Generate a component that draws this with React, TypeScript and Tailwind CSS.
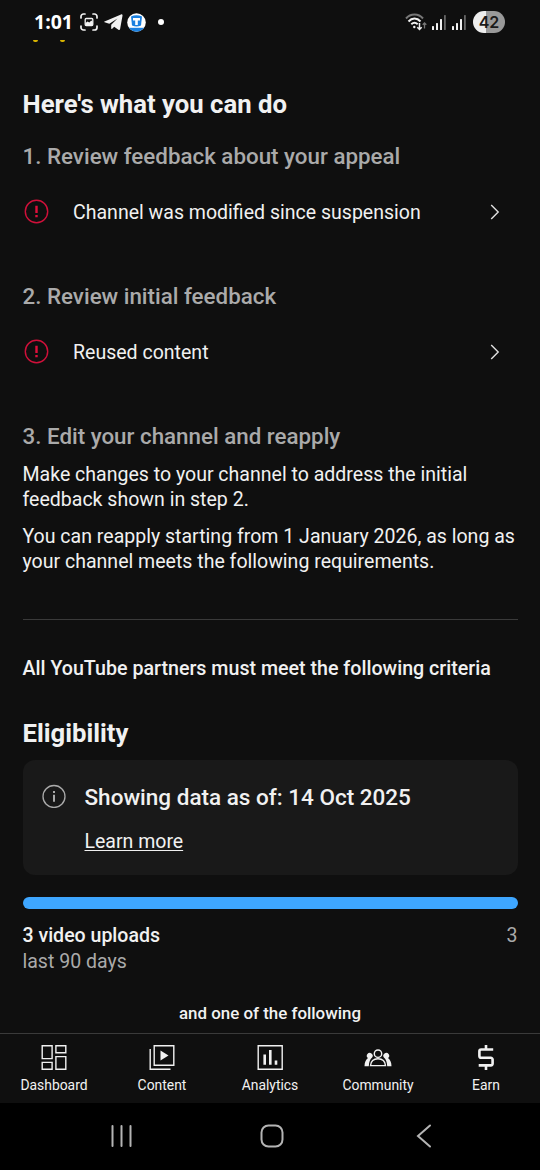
import type { ReactNode } from "react";

/* ---------- Status bar ---------- */

function SignalBars() {
  return (
    <svg width="14" height="15" viewBox="0 0 14 15" fill="#f1f1f1">
      <rect x="0" y="11" width="2" height="4" rx="0.6" />
      <rect x="4" y="8" width="2" height="7" rx="0.6" />
      <rect x="8" y="4" width="2" height="11" rx="0.6" />
      <rect x="12" y="0" width="1.8" height="15" rx="0.6" fill="#666" />
    </svg>
  );
}

function StatusBar() {
  return (
    <header className="relative flex h-11 items-center justify-between pl-[34px] pr-[35px]">
      <div className="flex items-center">
        <span className="w-[46px] font-['Open_Sans',sans-serif] text-[19.5px] font-bold leading-none text-white">
          1:01
        </span>
        {/* Smart capture */}
        <svg width="18" height="18" viewBox="0 0 18 18" fill="none" stroke="#f1f1f1" strokeWidth="1.7" strokeLinecap="round">
          <path d="M1 5V3.500a2.500 2.500 0 0 1 2.500-2.500H5M13 1h1.500A2.500 2.500 0 0 1 17 3.500V5M17 13v1.500a2.500 2.500 0 0 1-2.500 2.500H13M5 17H3.500A2.500 2.500 0 0 1 1 14.500V13" />
          <rect x="5.200" y="5.500" width="7.600" height="7" rx="1" strokeWidth="1.300" />
          <path d="M5.500 12.500V10l2-1.500 1.800 1 2-2 1.500 1.500v3.500z" fill="#f1f1f1" stroke="none" />
        </svg>
        {/* Telegram */}
        <svg className="ml-1.5" width="19" height="17" viewBox="0 0 19 17" fill="#f1f1f1">
          <path d="M0.500 7.400 17 0.500c1-.4 1.700.1 1.500 1.200l-2.400 13.400c-.2 1-.9 1.200-1.700.7l-4.200-3.100-2 2c-.5.500-1 .3-1-.4V10.800L13.500 4.600 5.300 9.700.6 8.300c-.7-.2-.7-.6-.1-.9z" />
        </svg>
        <svg className="ml-[4px]" width="19" height="19" viewBox="0 0 19 19">
          <defs>
            <clipPath id="badge">
              <circle cx="9.500" cy="9.500" r="9.300" />
            </clipPath>
          </defs>
          <circle cx="9.500" cy="9.500" r="9.300" fill="#fff" />
          <g clipPath="url(#badge)">
            <rect y="14.800" width="19" height="5" fill="#1a80e0" />
            <path d="M4 3.500Q9.500 1 15 3.500L14 12.500Q9.500 14.500 5 12.500z" fill="#1a80e0" />
            <path d="M6 5h7v2.500h-2.200v4.500H8.200V7.500H6z" fill="#fff" />
          </g>
        </svg>
        <span className="ml-[11.5px] size-1.5 rounded-full bg-white" />
      </div>

      <div className="flex items-center">
        <svg width="22" height="18" viewBox="0 0 22 18" fill="none" stroke="#f1f1f1" strokeWidth="2">
          <path d="M1 5.500C5.500.2 13.500.2 18 5.500" stroke="#777" />
          <path d="M3.500 8.500C7 4.600 12 4.600 15.500 8.500" />
          <path d="M6.300 11.300C8.300 9.400 10.700 9.400 12.700 11.300" />
          <circle cx="9.300" cy="14" r="1.200" fill="#f1f1f1" stroke="none" />
          <path d="M14.500 10v6.500M12.300 14.300l2.200 2.200 2.200-2.200" strokeWidth="1.500" />
          <path d="M19.500 15.500V10M17.700 11.800l1.800-1.800 1.800 1.800" strokeWidth="1.300" stroke="#777" />
        </svg>
        <span className="ml-[5px]">
          <SignalBars />
        </span>
        <span className="ml-[6px]">
          <SignalBars />
        </span>
        <span className="ml-[7px] flex h-[22px] w-8 items-center justify-center rounded-full bg-linear-to-r from-[#eeeeee] from-42% to-[#999999] to-42% font-['Inter',sans-serif] text-[16px] font-semibold text-[#1a1a1a]">
          42
        </span>
      </div>

      {/* Bottom edge of the illustration scrolled under the bar */}
      <span className="absolute left-[33px] top-10 h-0.5 w-[5px] rounded-b-full bg-[#d8b400]" />
      <span className="absolute left-[60px] top-10 h-0.5 w-[5px] rounded-b-full bg-[#d8b400]" />
    </header>
  );
}

/* ---------- Steps ---------- */

function StepHeading({ children }: { children: ReactNode }) {
  return <h2 className="text-[22.35px] font-medium leading-7 text-[#aaaaaa]">{children}</h2>;
}

function FeedbackRow({ label }: { label: string }) {
  return (
    <button className="mt-3.5 flex h-14 w-full items-center text-left">
      <svg className="-mt-0.5 ml-px" width="25" height="25" viewBox="0 0 25 25" fill="none">
        <circle cx="12.500" cy="12.500" r="11.200" stroke="#d0103a" strokeWidth="1.400" />
        <path d="M11.300 6.700h2.400v7.300h-2.400zM11.300 16h2.400v2.200h-2.400z" fill="#e0103c" />
      </svg>
      <span className="ml-[24.5px] mt-px flex-1 text-[19.55px] text-[#f1f1f1]">{label}</span>
      <svg className="-mt-px mr-[18px]" width="10" height="16" viewBox="0 0 10 16" fill="none" stroke="#e0e0e0" strokeWidth="1.400">
        <path d="M1.200 1l7 7-7 7" />
      </svg>
    </button>
  );
}

/* ---------- Eligibility ---------- */

function DataNotice() {
  return (
    <div className="mt-[11px] flex h-[115px] rounded-xl bg-[#191919] pl-[19px] pt-6">
      <svg width="24" height="24" viewBox="0 0 24 24" fill="none">
        <circle cx="12" cy="12.500" r="11" stroke="#aaaaaa" strokeWidth="1.300" />
        <path d="M11 7h2v2h-2zM11 10.700h2v7h-2z" fill="#aaaaaa" />
      </svg>
      <div className="ml-[19px]">
        <p className="text-[22.5px] font-medium leading-7 -mt-[1px] text-[#f1f1f1]">Showing data as of: 14 Oct 2025</p>
        <a href="#" className="mt-[18px] block text-[19.5px] leading-[25px] text-[#f1f1f1] underline underline-offset-2">
          Learn more
        </a>
      </div>
    </div>
  );
}

/* ---------- Bottom navigation ---------- */

const tabs: { label: string; icon: ReactNode }[] = [
  {
    label: "Dashboard",
    icon: (
      <g stroke="#f1f1f1" strokeWidth="1.400">
        <path d="M2.200 2.700h9.900v12.900H2.200zM15.900 2.700h9.900v7.100h-9.900zM2.200 19.400h9.900v6.900H2.200zM15.900 13.600h9.900v12.700h-9.900z" />
      </g>
    ),
  },
  {
    label: "Content",
    icon: (
      <g stroke="#f1f1f1" strokeWidth="1.400">
        <path d="M6.200 2.700h19.600v19.600H6.200zM2.200 6v20.300H22.500" />
        <path d="M12.500 7.500v10l8-5z" fill="#f1f1f1" stroke="none" />
      </g>
    ),
  },
  {
    label: "Analytics",
    icon: (
      <g stroke="#f1f1f1">
        <path d="M2.200 2.700h24v23.600h-24z" strokeWidth="1.400" />
        <path d="M8.700 11.500v10.300M14.300 7v14.800M20 17.500v4.300" strokeWidth="2.600" />
      </g>
    ),
  },
  {
    label: "Community",
    icon: (
      <g>
        <path d="M0.500 23.300c0-4.200 1.700-6.700 3.500-8.200a2.900 2.900 0 1 1 4.100-.600c-2.100 2-3.100 4.400-3.300 8.800zM27.500 23.300c0-4.200-1.700-6.700-3.500-8.200a2.900 2.900 0 1 0-4.100-.600c2.100 2 3.100 4.400 3.300 8.800z" fill="#f1f1f1" />
        <circle cx="14" cy="10.700" r="3.700" stroke="#f1f1f1" strokeWidth="1.400" fill="#0f0f0f" />
        <path d="M6.500 22.600c.4-4.600 3.400-6.900 7.500-6.900s7.100 2.300 7.500 6.900z" stroke="#f1f1f1" strokeWidth="1.400" fill="#0f0f0f" />
      </g>
    ),
  },
  {
    label: "Earn",
    icon: (
      <path
        d="M21.200 6.500H9.200a1.800 1.800 0 0 0-1.800 1.800V13a1.800 1.800 0 0 0 1.800 1.800h9.600a1.800 1.800 0 0 1 1.800 1.800v4a1.800 1.800 0 0 1-1.800 1.800H6.700M14 2v4.500M14 22.500V27"
        stroke="#f1f1f1"
        strokeWidth="2.600"
      />
    ),
  },
];

function BottomNav() {
  return (
    <nav className="grid h-[70px] grid-cols-5 border-t border-[#3a3a3a]">
      {tabs.map((tab) => (
        <a key={tab.label} href="#" className="flex flex-col items-center pt-[9px]">
          <svg width="29" height="29" viewBox="0 0 29 29" fill="none">
            {tab.icon}
          </svg>
          <span className="mt-[4px] text-[13.9px] leading-[18px] text-[#f1f1f1]">{tab.label}</span>
        </a>
      ))}
    </nav>
  );
}

function SystemNav() {
  return (
    <div className="flex flex-1 items-center justify-between bg-black pb-0.5 pl-[110px] pr-[108px] text-[#b4b4b4]">
      <svg width="23" height="22" viewBox="0 0 23 22" stroke="currentColor" strokeWidth="2" strokeLinecap="round">
        <path d="M2.500 1v20M11.500 1v20M20.500 1v20" />
      </svg>
      <svg className="-ml-[5px]" width="24" height="24" viewBox="0 0 24 24" fill="none" stroke="currentColor" strokeWidth="2">
        <rect x="1.500" y="1.500" width="21" height="21" rx="7" />
      </svg>
      <svg width="16" height="24" viewBox="0 0 16 24" fill="none" stroke="currentColor" strokeWidth="2" strokeLinecap="round">
        <path d="M14 1.500 2 12l12 10.500" />
      </svg>
    </div>
  );
}

export default function App() {
  return (
    <div className="flex h-[1170px] w-[540px] flex-col overflow-hidden bg-[#0f0f0f] font-['Roboto',sans-serif]">
      <StatusBar />

      {/* Main Content */}
      <main className="flex h-[989px] flex-col px-[22.5px] text-[19.55px] text-[#f1f1f1]">
        <h1 className="mt-11 text-[25.7px] font-bold leading-8">Here's what you can do</h1>

        <section className="mt-[22px]">
          <StepHeading>1. Review feedback about your appeal</StepHeading>
          <FeedbackRow label="Channel was modified since suspension" />
        </section>

        <section className="mt-[42px]">
          <StepHeading>2. Review initial feedback</StepHeading>
          <FeedbackRow label="Reused content" />
        </section>

        <section className="mt-[42px] leading-[25px]">
          <StepHeading>3. Edit your channel and reapply</StepHeading>
          <p className="mt-3">
            Make changes to your channel to address the initial
            <br />
            feedback shown in step 2.
          </p>
          <p className="mt-3 whitespace-nowrap">
            You can reapply starting from 1 January 2026, as long as
            <br />
            your channel meets the following requirements.
          </p>
        </section>

        <hr className="mt-[45px] border-[#3a3a3a]" />

        <p className="mt-9 whitespace-nowrap text-[19.65px] font-medium leading-[25px]">
          All YouTube partners must meet the following criteria
        </p>
        <h1 className="mt-9 text-[25.7px] font-bold leading-8">Eligibility</h1>
        <DataNotice />

        <div className="mt-[22px] h-3 rounded-full bg-[#3ea6ff]" />
        <div className="mt-3.5 flex justify-between leading-[26px]">
          <div>
            <p className="font-medium">3 video uploads</p>
            <p className="text-[#aaaaaa]">last 90 days</p>
          </div>
          <span className="text-[#aaaaaa]">3</span>
        </div>

        <p className="mt-[26px] text-center text-[16.9px] font-medium leading-6">and one of the following</p>
      </main>

      <BottomNav />
      <SystemNav />
    </div>
  );
}
